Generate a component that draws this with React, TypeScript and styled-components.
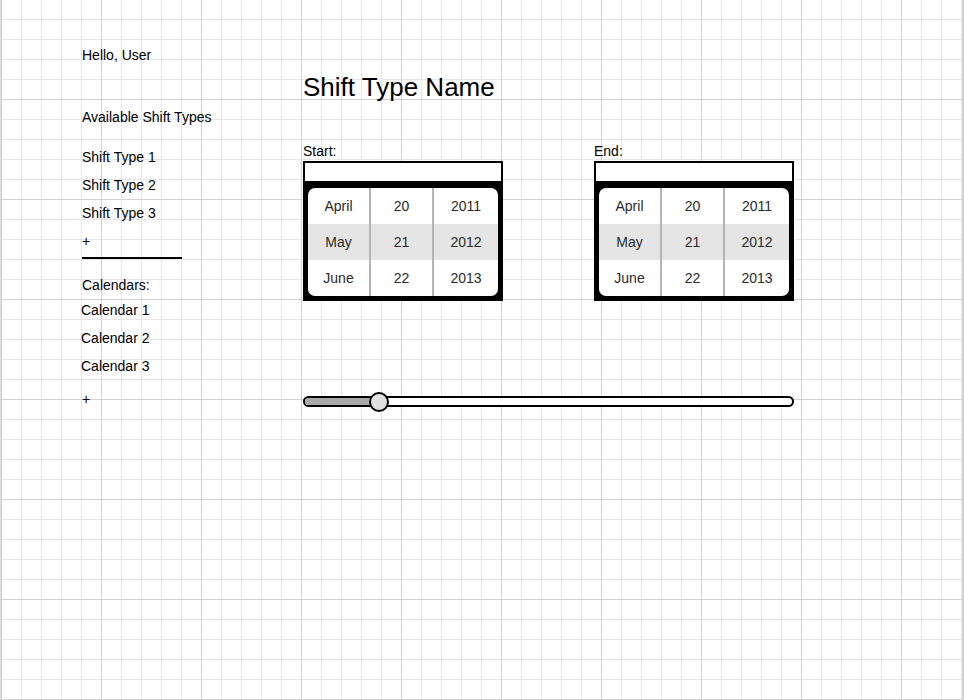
import styled, { createGlobalStyle } from 'styled-components';

const GlobalStyle = createGlobalStyle`
  html, body {
    margin: 0;
    padding: 0;
    background: #fff;
  }
  body {
    font-family: "Liberation Sans", Arial, sans-serif;
    color: #000;
  }
`;

const Frame = styled.div`
  width: 964px;
  min-height: 700px;
  box-sizing: border-box;
  border-left: 1px solid #dadada;
  border-right: 2px solid #d4d4d4;
  display: flex;
  background-color: #fff;
  background-image:
    linear-gradient(to right, #d2d2d2 1px, transparent 1px),
    linear-gradient(to bottom, #d2d2d2 1px, transparent 1px),
    linear-gradient(to right, #e6e6e6 1px, transparent 1px),
    linear-gradient(to bottom, #e6e6e6 1px, transparent 1px);
  background-size: 100px 100px, 100px 100px, 20px 20px, 20px 20px;
  background-position: 0 0, 0 -1px, 0 0, 0 -1px;
`;

const Sidebar = styled.aside`
  width: 221px;
  padding: 47px 0 0 81px;
  display: flex;
  flex-direction: column;
  font-size: 14px;
  line-height: 16px;
`;

const Greeting = styled.div``;

const SectionTitle = styled.div<{ $top: number }>`
  margin-top: ${({ $top }) => $top}px;
`;

const NavList = styled.div<{ $top: number; $shift?: number }>`
  display: flex;
  flex-direction: column;
  gap: 12px;
  margin-top: ${({ $top }) => $top}px;
  margin-left: ${({ $shift }) => $shift ?? 0}px;
`;

const NavItem = styled.div`
  cursor: pointer;
`;

const AddItem = styled.div<{ $top?: number }>`
  margin-top: ${({ $top }) => $top ?? 0}px;
  cursor: pointer;
`;

const Divider = styled.div`
  width: 100px;
  height: 2px;
  background: #000;
  margin-top: 8px;
`;

const Main = styled.main`
  width: 491px;
  padding-top: 72px;
  display: flex;
  flex-direction: column;
`;

const Heading = styled.h1`
  margin: 0;
  font-size: 26px;
  line-height: 30px;
  font-weight: normal;
`;

const PickerRow = styled.div`
  margin-top: 40px;
  display: flex;
  justify-content: space-between;
`;

const Field = styled.div`
  width: 200px;
  display: flex;
  flex-direction: column;
`;

const FieldLabel = styled.label`
  font-size: 14px;
  line-height: 16px;
  padding-top: 1px;
  margin-bottom: 2px;
`;

const DateInput = styled.input`
  box-sizing: border-box;
  width: 200px;
  height: 22px;
  margin: 0;
  border: 2px solid #000;
  background: #fff;
  padding: 0 4px;
  font: inherit;
  outline: none;
`;

const Wheel = styled.div`
  background: #000;
  padding: 5px;
`;

const WheelFace = styled.div`
  display: grid;
  grid-template-columns: 61px 63px 1fr;
  background: #fff;
  border-radius: 7px;
  overflow: hidden;
`;

const WheelColumn = styled.div<{ $divider?: boolean }>`
  display: flex;
  flex-direction: column;
  border-left: ${({ $divider }) => ($divider ? '2px solid #b4b4b4' : 'none')};
`;

const WheelCell = styled.div<{ $selected?: boolean }>`
  height: 36px;
  display: flex;
  align-items: center;
  justify-content: center;
  font-size: 14px;
  color: #2a2a2a;
  background: ${({ $selected }) => ($selected ? '#e5e5e5' : 'transparent')};
`;

const SliderTrack = styled.div`
  position: relative;
  margin-top: 95px;
  box-sizing: border-box;
  width: 491px;
  height: 11px;
  border: 2px solid #000;
  border-radius: 6px;
  background: #fff;
`;

const SliderFill = styled.div`
  position: absolute;
  left: 0;
  top: 0;
  bottom: 0;
  background: #a9a9a9;
  border-radius: 4px 0 0 4px;
`;

const SliderKnob = styled.div`
  position: absolute;
  top: 50%;
  width: 20px;
  height: 20px;
  box-sizing: border-box;
  border: 2px solid #000;
  border-radius: 50%;
  background: #e0e0e0;
  transform: translate(-50%, -50%);
`;

const shiftTypes = ['Shift Type 1', 'Shift Type 2', 'Shift Type 3'];
const calendars = ['Calendar 1', 'Calendar 2', 'Calendar 3'];
const wheel = [
  ['April', 'May', 'June'],
  ['20', '21', '22'],
  ['2011', '2012', '2013'],
];

const DatePicker = ({ label }: { label: string }) => (
  <Field>
    <FieldLabel>{label}</FieldLabel>
    <DateInput type="text" />
    <Wheel>
      <WheelFace>
        {wheel.map((col, i) => (
          <WheelColumn key={i} $divider={i > 0}>
            {col.map((v, j) => (
              <WheelCell key={v} $selected={j === 1}>
                {v}
              </WheelCell>
            ))}
          </WheelColumn>
        ))}
      </WheelFace>
    </Wheel>
  </Field>
);

const Slider = ({ value }: { value: number }) => {
  // knob sits on the track at value (0-100)
  const x = (value / 100) * 487;
  return (
    <SliderTrack>
      <SliderFill style={{ width: x }} />
      <SliderKnob style={{ left: x }} />
    </SliderTrack>
  );
};

export default function App() {
  return (
    <>
      <GlobalStyle />
      <Frame>
        <Sidebar>
          <Greeting>Hello, User</Greeting>
          <SectionTitle $top={46}>Available Shift Types</SectionTitle>
          <NavList $top={24}>
            {shiftTypes.map((s) => (
              <NavItem key={s}>{s}</NavItem>
            ))}
            <AddItem>+</AddItem>
          </NavList>
          <Divider />
          <SectionTitle $top={18}>Calendars:</SectionTitle>
          <NavList $top={9} $shift={-1}>
            {calendars.map((c) => (
              <NavItem key={c}>{c}</NavItem>
            ))}
          </NavList>
          <AddItem $top={17}>+</AddItem>
        </Sidebar>
        <Main>
          <Heading>Shift Type Name</Heading>
          <PickerRow>
            <DatePicker label="Start:" />
            <DatePicker label="End:" />
          </PickerRow>
          <Slider value={15.1} />
        </Main>
      </Frame>
    </>
  );
}
